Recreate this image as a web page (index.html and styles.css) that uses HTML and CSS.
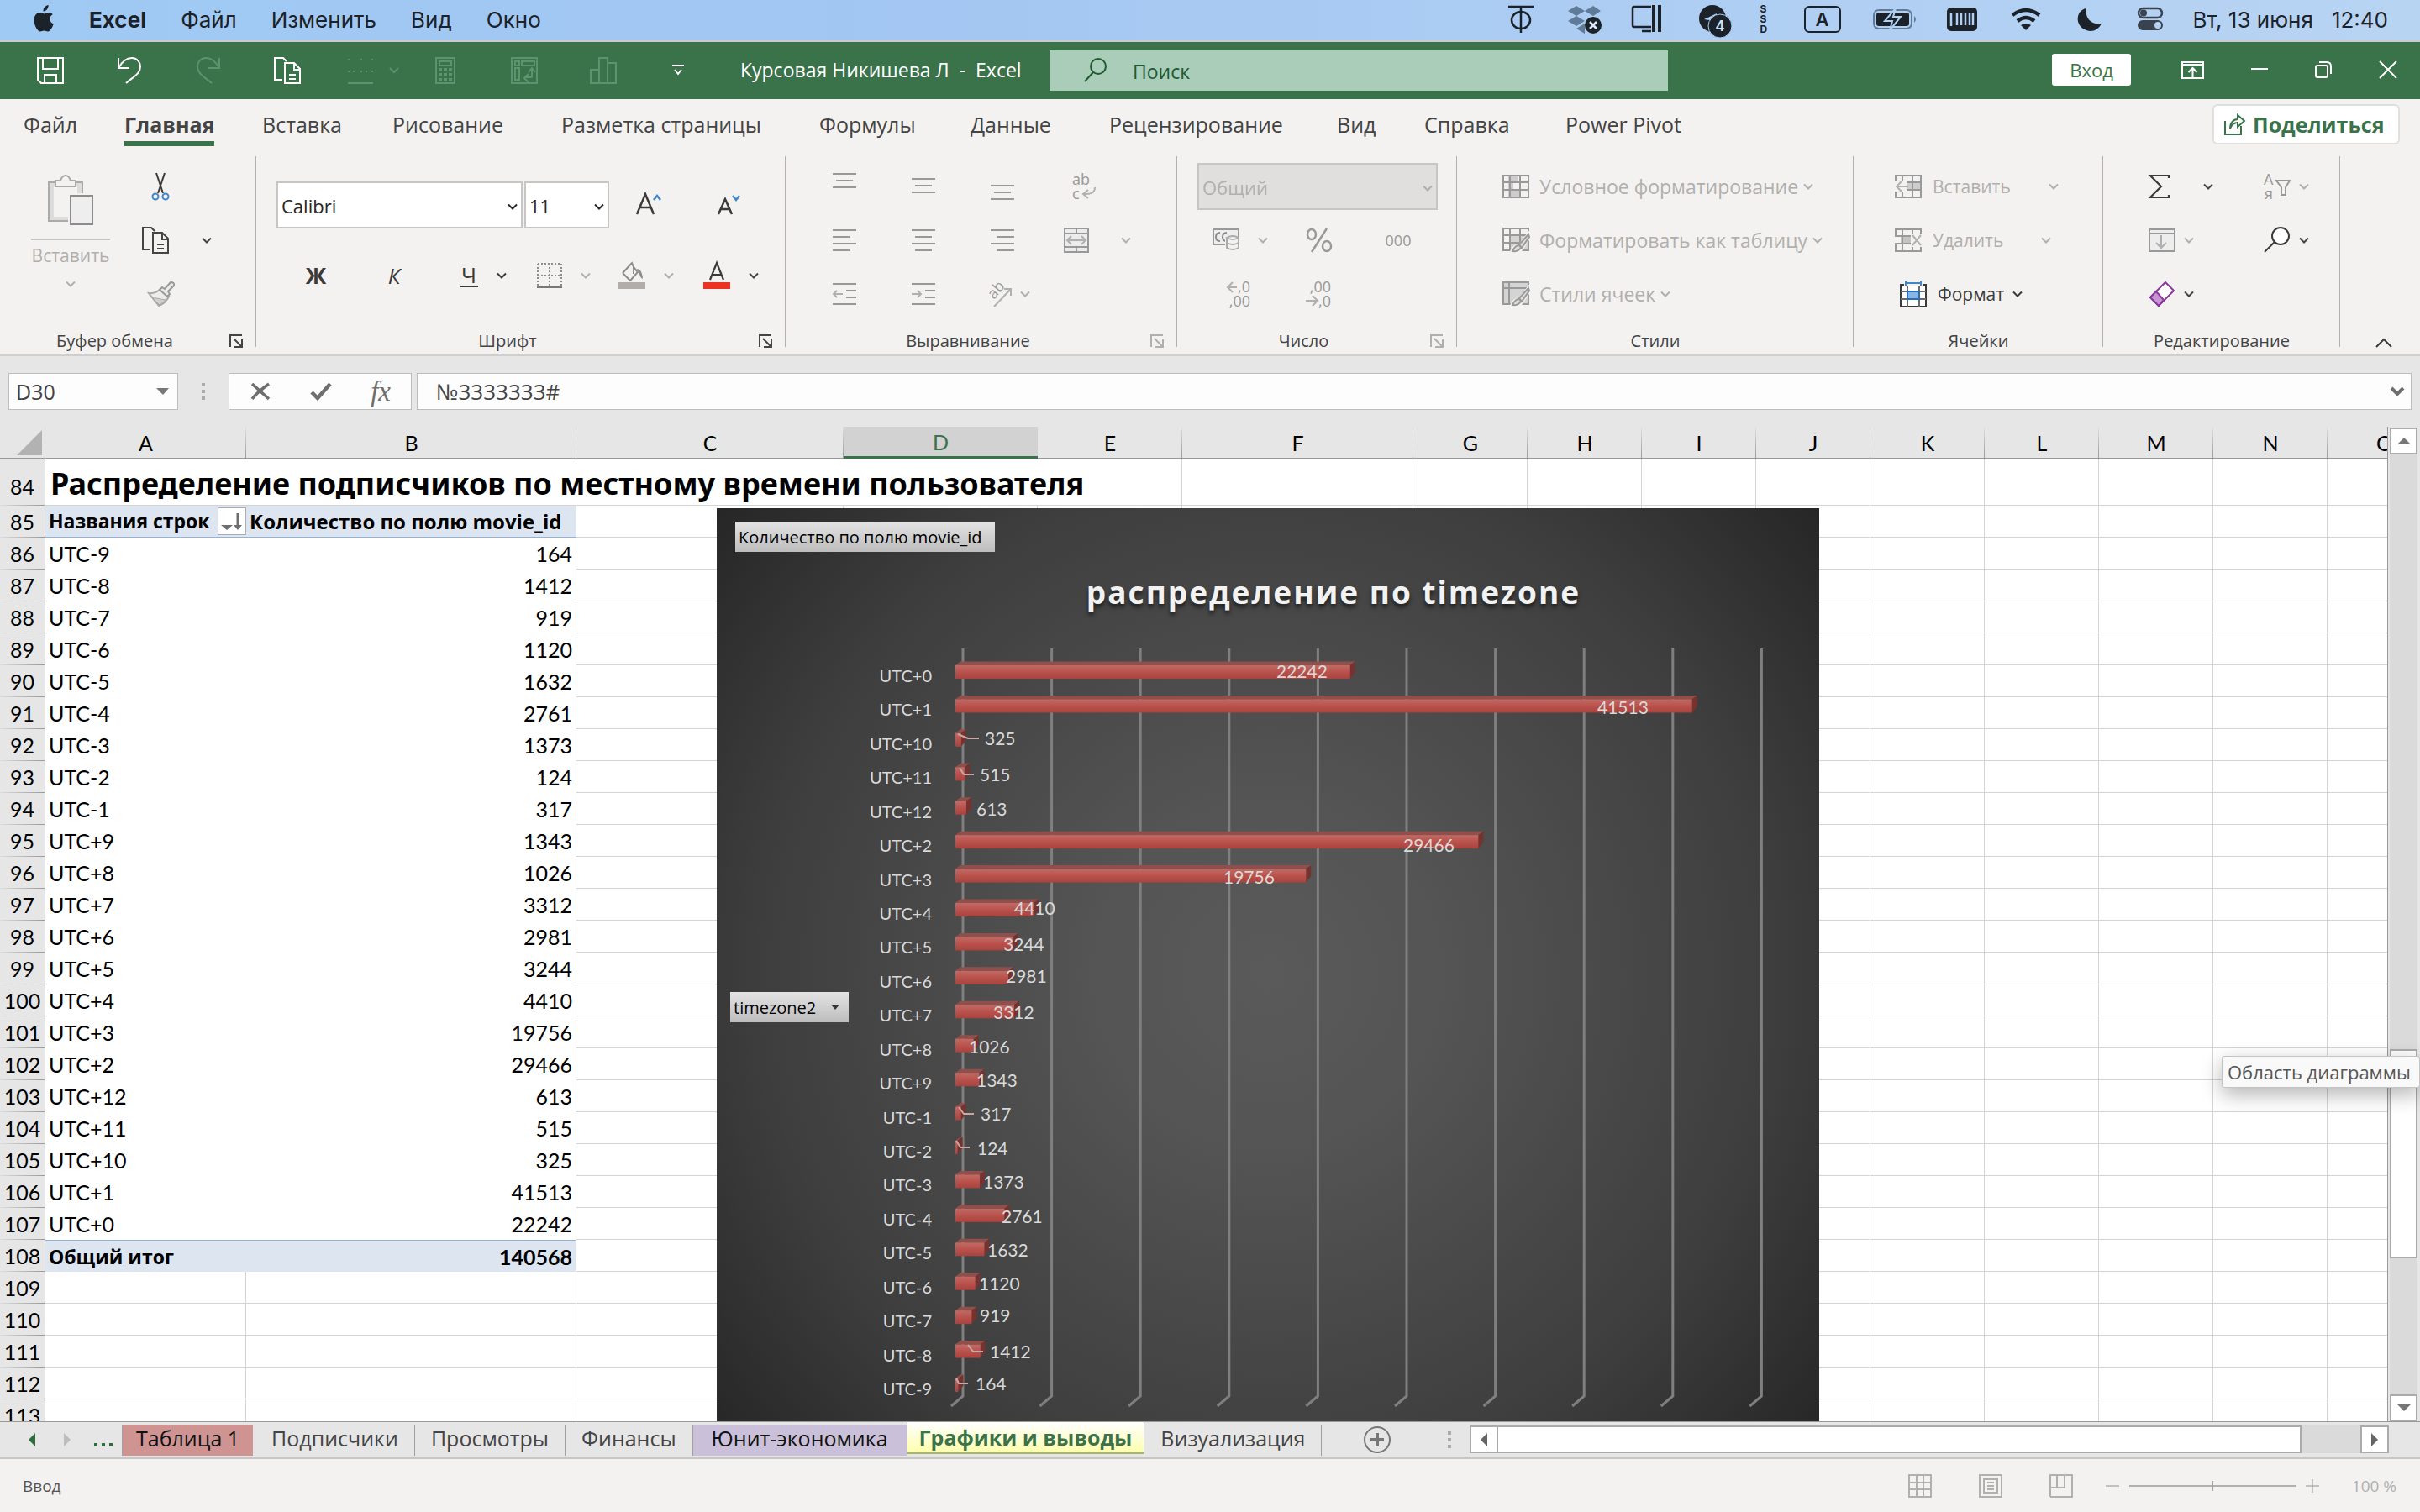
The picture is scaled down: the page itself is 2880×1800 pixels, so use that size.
FILE: index.html
```html
<!DOCTYPE html>
<html lang="ru">
<head>
<meta charset="utf-8">
<meta name="viewport" content="width=device-width, initial-scale=1">
<title>Курсовая Никишева Л - Excel</title>
<link rel="stylesheet" href="styles.css">
</head>
<body>
<svg class="defs" aria-hidden="true">
  <symbol id="chev" viewBox="0 0 12 8"><path d="M1 1.5 6 6.5 11 1.5" fill="none" stroke="currentColor" stroke-width="2"/></symbol>
  <symbol id="launch" viewBox="0 0 16 16"><path d="M1 15V1h14M5 5l9 9M15 6v9H6" fill="none" stroke="currentColor" stroke-width="2"/></symbol>
  <symbol id="copy" viewBox="0 0 32 32"><path d="M10 27H1V1h10l4 4" fill="none" stroke="currentColor" stroke-width="2"/><path d="M13 7h11l7 7v17H13zM24 7v8h7M18 21h8M18 26h8" fill="none" stroke="currentColor" stroke-width="2"/></symbol>
  <symbol id="table" viewBox="0 0 32 28"><path d="M1 1h30v26H1zM1 9h30M1 18h30M9 1v26M21 1v26" fill="none" stroke="currentColor" stroke-width="2"/></symbol>
</svg>

<nav class="menubar" aria-label="Строка меню">
  <svg class="apple" viewBox="0 0 25 32" width="25" height="32"><path d="M17.6 0c.2 2-.6 3.900-1.700 5.200-1.200 1.400-2.900 2.300-4.400 2.200-.2-1.900.7-3.900 1.700-5.100C14.400 1 16.200.1 17.600 0zM22.800 11c-2.300 1.400-3.500 3.200-3.400 5.500 0 2.900 1.700 5 4.300 6-.8 2.500-3.700 9-6.700 9-1.700 0-2.400-1-4.500-1s-2.900 1-4.500 1C4.500 31.500.6 24 .6 18c0-5.800 3.500-8.900 6.800-8.900 2.200 0 3.700 1.300 5.100 1.300 1.300 0 3.200-1.500 5.700-1.500 1.500 0 3.400.7 4.600 2.100z" fill="#1c2229"/></svg>
  <a class="app" href="#">Excel</a><a href="#">Файл</a><a href="#">Изменить</a><a href="#">Вид</a><a href="#">Окно</a>
  <div class="extras">
    <svg viewBox="0 0 64 48" width="64" height="48"><path d="M14 9h30M29 9v31" stroke="#1c2229" stroke-width="2.500"/><ellipse cx="29" cy="25" rx="11" ry="10" fill="none" stroke="#1c2229" stroke-width="2.500"/></svg>
    <svg viewBox="0 0 80 48" width="80" height="48"><path d="M21 14l10-6 10 6-10 6zM41 14l10-6 9 6-9 6zM21 26l10-6 10 6-10 6zM31 35l10-6v12z" fill="#5f7b98"/><circle cx="51" cy="31" r="10" fill="#1c2229"/><path d="M47 27l8 8m0-8l-8 8" stroke="#dceafa" stroke-width="2.500"/></svg>
    <svg viewBox="0 0 72 48" width="72" height="48"><path d="M40 9H20q-2 0-2 2v20q0 2 2 2h20M29 38h11" fill="none" stroke="#1c2229" stroke-width="2.500"/><path d="M43 7v32M50 7v32" stroke="#1c2229" stroke-width="4"/></svg>
    <svg viewBox="0 0 82 48" width="82" height="48"><circle cx="41" cy="23" r="16" fill="#1c2229"/><path d="M31 24l15-7-2 9z" fill="#b0cff2"/><circle cx="50" cy="32" r="14" fill="#1c2229" stroke="#aed0f3" stroke-width="1"/><text class="badge" x="50" y="38" text-anchor="middle">4</text></svg>
    <span class="ssd">S<br>S<br>D</span>
    <span class="lang"><b>A</b></span>
    <svg viewBox="0 0 88 48" width="88" height="48"><rect x="19" y="13" width="45" height="22" rx="6" fill="none" stroke="#5f7b98" stroke-width="2"/><path d="M67 20q4 4 0 8z" fill="#5f7b98"/><rect x="22" y="16" width="39" height="16" rx="3" fill="#1c2229"/><path d="M45 11L32 26h9l-3 11 13-16h-9z" fill="#1c2229" stroke="#add0f3" stroke-width="2"/></svg>
    <svg viewBox="0 0 76 48" width="76" height="48"><rect x="18" y="10" width="36" height="28" rx="5" fill="#1c2229"/><path d="M23 16v16M30 17v14M35 17v14M40 17v14M45 17v14M49 17v14" stroke="#b0d0f2" stroke-width="2.500"/></svg>
    <svg viewBox="0 0 74 48" width="74" height="48"><path d="M20 19q16-12 32 0M26 26q10-8 20 0" fill="none" stroke="#1c2229" stroke-width="4.500"/><path d="M30 31q6-4 12 0l-6 6z" fill="#1c2229"/></svg>
    <svg viewBox="0 0 74 48" width="74" height="48"><path d="M34 11c-2 12 6 20 18 18-3 6-8 9-13 9-20-2-19-25-5-27z" fill="#1c2229"/></svg>
    <svg viewBox="0 0 70 48" width="70" height="48"><rect x="22" y="11" width="28" height="11" rx="5.500" fill="none" stroke="#39434f" stroke-width="2.500"/><circle cx="28" cy="16.500" r="4" fill="#39434f"/><rect x="21" y="25" width="30" height="12" rx="6" fill="#39434f"/><circle cx="45" cy="31" r="4" fill="#b5d2f2"/></svg>
  </div>
  <time class="clock"><span>Вт, 13 июня</span><span>12:40</span></time>
</nav>

<header class="titlebar">
  <div class="quick">
    <button aria-label="Сохранить"><svg viewBox="0 0 32 32" width="32" height="32"><path d="M1 1h30v30H5l-4-4zM7 1v13h18V1M9 31V21h14v10" fill="none" stroke="currentColor" stroke-width="2"/></svg></button>
    <button aria-label="Отменить"><svg viewBox="0 0 32 32" width="32" height="32"><path d="M3 1v12h13M3 13C8 4 14 1 19 1c6 0 10 5 10 10 0 9-8 12-17 20" fill="none" stroke="currentColor" stroke-width="2"/></svg></button>
    <button class="dim" aria-label="Вернуть"><svg viewBox="0 0 32 32" width="32" height="32"><path d="M29 1v12H16M29 13C24 4 18 1 13 1 7 1 3 6 3 11c0 9 8 12 17 20" fill="none" stroke="currentColor" stroke-width="2"/></svg></button>
    <button aria-label="Копировать"><svg width="32" height="32"><use href="#copy"/></svg></button>
    <button class="dim" aria-label="Границы"><svg viewBox="0 0 76 32" width="76" height="32"><path d="M16 3h2m13 0h2m11 0h2M16 17h2m4 0h2m7 0h2m4 0h2m5 0h2M16 31h30M66 13l5 5 5-5" fill="none" stroke="currentColor" stroke-width="2"/></svg></button>
    <button class="dim" aria-label="Вычислить"><svg viewBox="0 0 32 32" width="32" height="32"><path d="M5 1h22v30H5zM9 5h14v5H9z" fill="none" stroke="currentColor" stroke-width="2"/><path d="M8 15h4m2 0h4m2 0h4M8 21h4m2 0h4m2 0h4M8 27h4m2 0h4m2 0h4" stroke="currentColor" stroke-width="4"/></svg></button>
    <button class="dim" aria-label="Сводная таблица"><svg viewBox="0 0 32 32" width="32" height="32"><path d="M1 1h30v30H1zM5 5h5v5H5zM13 5h15v5H13zM5 13h5v14H5zM25 24V14m-4 4 4-5 4 5M25 24h-8m4-4-5 5 5 5" fill="none" stroke="currentColor" stroke-width="2"/></svg></button>
    <button class="dim" aria-label="Диаграмма"><svg viewBox="0 0 32 32" width="32" height="32"><path d="M1 15h10v16H1zM11 1h10v30H11zM21 7h10v24H21z" fill="none" stroke="currentColor" stroke-width="2"/></svg></button>
    <button aria-label="Настройка панели"><svg viewBox="0 0 24 14" width="24" height="14"><path d="M0 1h14M3 6l4 5 4-5" fill="none" stroke="currentColor" stroke-width="2"/></svg></button>
  </div>
  <h1>Курсовая Никишева Л&nbsp; -&nbsp; Excel</h1>
  <label class="search">
    <svg viewBox="0 0 27 30" width="27" height="30"><circle cx="17" cy="10" r="9" fill="none" stroke="#1f5a33" stroke-width="2"/><path d="M11 17L1 28" stroke="#1f5a33" stroke-width="2"/></svg>
    <input type="text" placeholder="Поиск" aria-label="Поиск">
  </label>
  <div class="window">
    <button class="login">Вход</button>
    <button aria-label="Показ ленты"><svg viewBox="0 0 27 21" width="27" height="21"><path d="M1 1h25v19H1zM1 4h25M13.500 19V8m-5 5 5-5 5 5" fill="none" stroke="#fff" stroke-width="2"/></svg></button>
    <button aria-label="Свернуть"><svg viewBox="0 0 20 20" width="20" height="20"><path d="M0 9h20" stroke="#fff" stroke-width="2"/></svg></button>
    <button aria-label="Восстановить"><svg viewBox="0 0 20 20" width="20" height="20"><rect x="1" y="5" width="14" height="14" rx="2" fill="none" stroke="#fff" stroke-width="2"/><path d="M5 1h9q5 0 5 5v9" fill="none" stroke="#fff" stroke-width="2"/></svg></button>
    <button aria-label="Закрыть"><svg viewBox="0 0 22 20" width="22" height="20"><path d="M1 0l20 20M21 0L1 20" stroke="#fff" stroke-width="2"/></svg></button>
  </div>
</header>

<nav class="tabs" aria-label="Лента">
  <div class="tablist">
    <a href="#">Файл</a><a href="#" class="active">Главная</a><a href="#">Вставка</a><a href="#">Рисование</a><a href="#">Разметка страницы</a><a href="#">Формулы</a><a href="#">Данные</a><a href="#">Рецензирование</a><a href="#">Вид</a><a href="#">Справка</a><a href="#">Power Pivot</a>
  </div>
  <button class="share"><svg viewBox="0 0 26 26" width="26" height="26"><path d="M1 9v16h19V15M7 18c0-7 4-11 9-11V2l8 7-8 7v-5c-4 0-7 2-9 7z" fill="none" stroke="currentColor" stroke-width="2"/></svg>Поделиться</button>
</nav>

<section class="ribbon">
  <div class="group g-clip">
    <div class="body">
      <button class="paste off">
        <svg viewBox="0 0 54 60" width="54" height="60"><path d="M1 9h40v46H1z" fill="#dcdcdc" stroke="#aaa" stroke-width="2"/><path d="M7 14h28v36H7z" fill="#f3f2f0"/><path d="M9 14V7h6q2-6 6-6t6 6h6v7z" fill="#f3f2f0" stroke="#aaa" stroke-width="2"/><path d="M24 22h30v38H24z" fill="#f3f2f0"/><path d="M27 25h26v34H27z" fill="#eee" stroke="#8c8c8c" stroke-width="2"/></svg>
        <span>Вставить</span>
        <svg class="chev"><use href="#chev"/></svg>
      </button>
      <div class="rows">
        <button aria-label="Вырезать"><svg viewBox="0 0 34 32" width="34" height="32"><path d="M18 0l8 24M28 0l-8 24" fill="none" stroke="#3b3a39" stroke-width="2"/><circle cx="17" cy="28" r="3.500" fill="none" stroke="#3f87c9" stroke-width="2"/><circle cx="29" cy="28" r="3.500" fill="none" stroke="#3f87c9" stroke-width="2"/></svg></button>
        <button aria-label="Копировать"><svg width="34" height="32"><use href="#copy"/></svg><svg class="chev far"><use href="#chev"/></svg></button>
        <button class="off brush" aria-label="Формат по образцу"><svg viewBox="0 0 32 30" width="32" height="30"><path d="M1 14q8 1 14-5l10 9q-4 8-12 11z" fill="#ececec" stroke="#aaa" stroke-width="2"/><path d="M5 19l9 9 7-6z" fill="#d0d0d0" stroke="#aaa" stroke-width="1"/><path d="M14 10l3-3 3 2 7-8q5 0 4 4l-7 7 2 3-3 3z" fill="#ececec" stroke="#999" stroke-width="2"/></svg></button>
      </div>
    </div>
    <footer><span>Буфер обмена</span><button aria-label="Параметры буфера"><svg><use href="#launch"/></svg></button></footer>
  </div>

  <div class="group g-font">
    <div class="body">
      <div class="line">
        <span class="combo font-name"><select aria-label="Шрифт"><option>Calibri</option></select><svg class="chev"><use href="#chev"/></svg></span>
        <span class="combo font-size"><select aria-label="Размер"><option>11</option></select><svg class="chev"><use href="#chev"/></svg></span>
        <button class="grow" aria-label="Увеличить шрифт"><svg viewBox="0 0 30 28" width="30" height="28"><path d="M1 25L11 1l10 24M4 17h14" fill="none" stroke="#3b3a39" stroke-width="2.500"/><path d="M21 8l4-5 4 5" fill="none" stroke="#3f87c9" stroke-width="2.500"/></svg></button>
        <button class="shrink" aria-label="Уменьшить шрифт"><svg viewBox="0 0 28 28" width="28" height="28"><path d="M1 25L9 7l8 18M3 19h12" fill="none" stroke="#3b3a39" stroke-width="2.500"/><path d="M18 3l4 5 4-5" fill="none" stroke="#3f87c9" stroke-width="2.500"/></svg></button>
      </div>
      <div class="faces">
        <button class="face"><b>Ж</b></button>
        <button class="face"><i>К</i></button>
        <button class="face"><span class="under">Ч</span><svg class="chev wide"><use href="#chev"/></svg></button>
        <button class="off" aria-label="Границы"><svg viewBox="0 0 30 30" width="30" height="30"><path d="M1 1v27M29 1v27M15 1v27M1 1h28M1 15h28" fill="none" stroke="#8c8c8c" stroke-width="2" stroke-dasharray="2 2"/><path d="M0 29h30" stroke="#777" stroke-width="2"/></svg><svg class="chev wide"><use href="#chev"/></svg></button>
        <button class="off" aria-label="Цвет заливки"><svg viewBox="0 0 32 32" width="32" height="32"><path d="M5 13L16 1l2 5v8M18 6l5 6-9 10-9-9" fill="none" stroke="#8c8c8c" stroke-width="2"/><path d="M22 8q6 0 7 12-4-2-4-6z" fill="#8c8c8c"/><path d="M0 24h32v8H0z" fill="#b1adab"/></svg><svg class="chev wide"><use href="#chev"/></svg></button>
        <button aria-label="Цвет текста"><svg viewBox="0 0 32 32" width="32" height="32"><path d="M8 21l8-20 8 20M10.500 15h11" fill="none" stroke="#3b3a39" stroke-width="2.200"/><path d="M0 24h32v8H0z" fill="#ea3323"/></svg><svg class="chev wide"><use href="#chev"/></svg></button>
      </div>
    </div>
    <footer><span>Шрифт</span><button aria-label="Параметры шрифта"><svg><use href="#launch"/></svg></button></footer>
  </div>

  <div class="group g-align off">
    <div class="body">
      <button aria-label="По верхнему краю"><svg viewBox="0 0 28 32" width="28" height="32"><path d="M0 1h28M4 9h20M0 17h28" stroke="#999" stroke-width="2"/></svg></button>
      <button aria-label="По середине"><svg viewBox="0 0 28 32" width="28" height="32"><path d="M0 7h28M4 15h20M0 23h28" stroke="#999" stroke-width="2"/></svg></button>
      <button aria-label="По нижнему краю"><svg viewBox="0 0 28 32" width="28" height="32"><path d="M0 15h28M4 23h20M0 31h28" stroke="#999" stroke-width="2"/></svg></button>
      <button class="lead" aria-label="Перенести текст"><svg viewBox="0 0 44 32" width="44" height="32"><text class="glyph" x="10" y="14">ab</text><text class="glyph" x="10" y="31">c</text><path d="M37 17q0 9-13 8m5-5-6 5 6 5" fill="none" stroke="#b0b0b0" stroke-width="2"/></svg></button>
      <button aria-label="По левому краю"><svg viewBox="0 0 28 28" width="28" height="28"><path d="M0 2h28M0 10h20M0 18h28M0 26h20" stroke="#999" stroke-width="2"/></svg></button>
      <button aria-label="По центру"><svg viewBox="0 0 28 28" width="28" height="28"><path d="M0 2h28M4 10h20M0 18h28M4 26h20" stroke="#999" stroke-width="2"/></svg></button>
      <button aria-label="По правому краю"><svg viewBox="0 0 28 28" width="28" height="28"><path d="M0 2h28M8 10h20M0 18h28M8 26h20" stroke="#999" stroke-width="2"/></svg></button>
      <button class="lead" aria-label="Объединить"><svg viewBox="0 0 30 30" width="30" height="30"><path d="M1 1h28v28H1zM1 7h28M1 23h28M15 1v6M15 23v6" fill="#ececec" stroke="#999" stroke-width="2"/><path d="M5 15h20m-16-5-5 5 5 5m12-10 5 5-5 5" fill="none" stroke="#b0b0b0" stroke-width="2"/></svg><svg class="chev far"><use href="#chev"/></svg></button>
      <button aria-label="Уменьшить отступ"><svg viewBox="0 0 28 28" width="28" height="28"><path d="M0 2h28M16 10h12M16 18h12M0 26h28" stroke="#999" stroke-width="2"/><path d="M12 14H1m4-4-4 4 4 4" fill="none" stroke="#b0b0b0" stroke-width="2"/></svg></button>
      <button aria-label="Увеличить отступ"><svg viewBox="0 0 28 28" width="28" height="28"><path d="M0 2h28M16 10h12M16 18h12M0 26h28" stroke="#999" stroke-width="2"/><path d="M0 14h11m-4-4 4 4-4 4" fill="none" stroke="#b0b0b0" stroke-width="2"/></svg></button>
      <button class="lead" aria-label="Ориентация"><svg viewBox="0 0 32 32" width="32" height="32"><text class="glyph" x="0" y="0" transform="translate(11 23) rotate(-50)">ab</text><path d="M11 31L31 10m-8 0h8v8" fill="none" stroke="#b0b0b0" stroke-width="2"/></svg><svg class="chev near"><use href="#chev"/></svg></button>
    </div>
    <footer><span>Выравнивание</span><button aria-label="Параметры выравнивания"><svg><use href="#launch"/></svg></button></footer>
  </div>

  <div class="group g-num off">
    <div class="body">
      <span class="combo number"><select aria-label="Числовой формат" disabled><option>Общий</option></select><svg class="chev"><use href="#chev"/></svg></span>
      <button aria-label="Финансовый формат"><svg viewBox="0 0 32 28" width="32" height="28"><path d="M1 1h30v18H1z" fill="#eee" stroke="#999" stroke-width="2"/><path d="M9 5q-5 0-5 5t5 5M17 5q-5 0-5 5t5 5" fill="none" stroke="#8c8c8c" stroke-width="2"/><path d="M15 10h17v18H15z" fill="#f3f2f0"/><path d="M17 11v12q7 4 14 0V11q-7-4-14 0q7 4 14 0M17 17q7 4 14 0" fill="none" stroke="#aaa" stroke-width="2"/></svg><svg class="chev wide"><use href="#chev"/></svg></button>
      <button aria-label="Процентный формат"><svg viewBox="0 0 32 28" width="32" height="28"><path d="M25 0L7 28" stroke="#999" stroke-width="2.500"/><ellipse cx="7" cy="7" rx="5" ry="6" fill="none" stroke="#999" stroke-width="2.500"/><ellipse cx="25" cy="21" rx="5" ry="6" fill="none" stroke="#999" stroke-width="2.500"/></svg></button>
      <button class="zeros">000</button>
      <button aria-label="Увеличить разрядность"><svg viewBox="0 0 32 32" width="32" height="32"><text class="glyph" x="28" y="14" text-anchor="end">,0</text><text class="glyph" x="28" y="31" text-anchor="end">,00</text><path d="M12 8H1m6-6-6 6 6 6" fill="none" stroke="#b0b0b0" stroke-width="2"/></svg></button>
      <button aria-label="Уменьшить разрядность"><svg viewBox="0 0 32 32" width="32" height="32"><text class="glyph" x="30" y="14" text-anchor="end">,00</text><text class="glyph" x="30" y="31" text-anchor="end">,0</text><path d="M0 24h14m-6-6 6 6-6 6" fill="none" stroke="#b0b0b0" stroke-width="2"/></svg></button>
    </div>
    <footer><span>Число</span><button aria-label="Параметры числа"><svg><use href="#launch"/></svg></button></footer>
  </div>

  <div class="group g-styles">
    <div class="body rows">
      <button class="off"><svg viewBox="0 0 32 28" width="32" height="28"><path d="M7 1h11v8H7zM7 9h6v9H7zM7 18h15v9H7z" fill="#cdcdcd"/><use href="#table" width="32" height="28" color="#999"/></svg><span>Условное форматирование</span><svg class="chev"><use href="#chev"/></svg></button>
      <button class="off"><svg viewBox="0 0 32 30" width="32" height="30"><path d="M10 9h20v18H10z" fill="#d4d4d4"/><use href="#table" width="32" height="28" color="#999"/><path d="M31 8L20 22q-6-1-9 7 8 2 12-4l9-14z" fill="#ddd" stroke="#f3f2f0" stroke-width="4"/><path d="M31 8L20 20l3 4 9-13zM20 21q-5 0-8 7 8 1 10-5z" fill="#ddd" stroke="#999" stroke-width="2"/></svg><span>Форматировать как таблицу</span><svg class="chev"><use href="#chev"/></svg></button>
      <button class="off"><svg viewBox="0 0 32 30" width="32" height="30"><path d="M1 1h30v26H1zM1 8h30M8 1v26" fill="#d4d4d4" stroke="#999" stroke-width="2"/><path d="M31 8L20 22q-6-1-9 7 8 2 12-4l9-14z" fill="#ddd" stroke="#f3f2f0" stroke-width="4"/><path d="M31 8L20 20l3 4 9-13zM20 21q-5 0-8 7 8 1 10-5z" fill="#ddd" stroke="#999" stroke-width="2"/></svg><span>Стили ячеек</span><svg class="chev"><use href="#chev"/></svg></button>
    </div>
    <footer><span>Стили</span></footer>
  </div>

  <div class="group g-cells">
    <div class="body rows">
      <button class="off split"><svg viewBox="0 0 32 28" width="32" height="28"><path d="M12 9h19v9H12z" fill="#cdcdcd"/><use href="#table" width="32" height="28" color="#999"/><path d="M0 8h14v12H0z" fill="#f3f2f0"/><path d="M16 14H2m6-6-6 6 6 6" fill="none" stroke="#b0b0b0" stroke-width="2"/></svg><span>Вставить</span><svg class="chev"><use href="#chev"/></svg></button>
      <button class="off split"><svg viewBox="0 0 32 28" width="32" height="28"><path d="M7 9h14v9H7z" fill="#c4c4c4"/><use href="#table" width="32" height="28" color="#999"/><path d="M19 6h13v16H19zM0 10h6v7H0z" fill="#f3f2f0"/><path d="M21 8l10 12m0-12L21 20" fill="none" stroke="#b0b0b0" stroke-width="2"/></svg><span>Удалить</span><svg class="chev"><use href="#chev"/></svg></button>
      <button class="format"><svg viewBox="0 0 32 32" width="32" height="32"><path d="M1 5h30v26H1z" fill="#fff" stroke="#3b3a39" stroke-width="2"/><path d="M1 13h30M1 22h30M9 5v26M23 5v26" stroke="#6b6b6b" stroke-width="2"/><path d="M9 13h14v9H9z" fill="#86b6e6" stroke="#2b6cb5" stroke-width="2"/><path d="M5 0h22v7H5z" fill="#f3f2f0"/><path d="M7 3h18M7 0v6M25 0v6" stroke="#3f87c9" stroke-width="2"/></svg><span>Формат</span><svg class="chev near"><use href="#chev"/></svg></button>
    </div>
    <footer><span>Ячейки</span></footer>
  </div>

  <div class="group g-edit">
    <div class="body">
      <button class="sum" aria-label="Автосумма"><svg viewBox="0 0 32 28" width="32" height="28"><path d="M24 4V1H2l13 13L2 27h22v-3" fill="none" stroke="#3b3a39" stroke-width="2.200"/></svg><svg class="chev"><use href="#chev"/></svg></button>
      <button class="off" aria-label="Сортировка"><svg viewBox="0 0 32 32" width="32" height="32"><text class="glyph" x="0" y="14">A</text><text class="glyph" x="1" y="31">я</text><path d="M15 9h16l-5 8v9h-5v-9z" fill="none" stroke="#999" stroke-width="2"/></svg><svg class="chev"><use href="#chev"/></svg></button>
      <button class="off" aria-label="Заполнить"><svg viewBox="0 0 32 28" width="32" height="28"><path d="M1 1h30v26H1zM1 6h30" fill="#ededed" stroke="#999" stroke-width="2"/><path d="M15 8v15m-6-6 6 6 6-6" fill="none" stroke="#b0b0b0" stroke-width="2"/></svg><svg class="chev"><use href="#chev"/></svg></button>
      <button aria-label="Найти"><svg viewBox="0 0 32 32" width="32" height="32"><circle cx="20" cy="11" r="10" fill="#fff" stroke="#3b3a39" stroke-width="2"/><path d="M13 18L1 30" stroke="#3b3a39" stroke-width="2"/></svg><svg class="chev"><use href="#chev"/></svg></button>
      <button aria-label="Очистить"><svg viewBox="0 0 32 30" width="32" height="30"><path d="M20 1l10 10-18 18L2 19z" fill="#fff" stroke="#8a3a9b" stroke-width="2"/><path d="M9 12l9 10-6 7L2 19z" fill="#c795d3" stroke="#8a3a9b" stroke-width="2"/></svg><svg class="chev"><use href="#chev"/></svg></button>
    </div>
    <footer><span>Редактирование</span></footer>
  </div>
  <button class="collapse" aria-label="Свернуть ленту"><svg viewBox="0 0 20 12" width="20" height="12"><path d="M1 11l9-9 9 9" fill="none" stroke="#3b3a39" stroke-width="2"/></svg></button>
</section>

<section class="formula">
  <div class="field namebox"><input type="text" value="D30" aria-label="Имя ячейки"><svg viewBox="0 0 15 8" width="15" height="8"><path d="M0 0h15l-7 8z" fill="#777"/></svg></div>
  <svg class="dots" viewBox="0 0 4 20" width="4" height="20"><path d="M2 0v4m0 4v4m0 4v4" stroke="#ababab" stroke-width="4"/></svg>
  <div class="field actions">
    <button aria-label="Отмена"><svg viewBox="0 0 24 22" width="24" height="22"><path d="M2 2l20 18M22 2Q8 12 2 20" fill="none" stroke="#6e6e6e" stroke-width="3.500"/></svg></button>
    <button aria-label="Ввод"><svg viewBox="0 0 26 22" width="26" height="22"><path d="M2 12l7 7L24 2" fill="none" stroke="#6e6e6e" stroke-width="4.500"/></svg></button>
    <button class="fx">fx</button>
  </div>
  <div class="field entry"><input type="text" value="№3333333#" aria-label="Строка формул"><svg viewBox="0 0 18 12" width="18" height="12"><path d="M2 2l7 7 7-7" fill="none" stroke="#6e6e6e" stroke-width="4"/></svg></div>
</section>

<main class="workspace">
  <div class="sheet">
    <table class="grid">
      <colgroup><col class="c-num"><col class="c-a"><col class="c-b"><col class="c-c"><col class="c-d"><col class="c-e"><col class="c-f"><col span="9" class="c-std"></colgroup>
      <thead><tr>
        <th class="corner"><svg viewBox="0 0 30 30" width="30" height="30"><path d="M30 0v30H0z" fill="#b2b2b2"/></svg></th>
        <th>A</th><th>B</th><th>C</th><th class="current">D</th><th>E</th><th>F</th><th>G</th><th>H</th><th>I</th><th>J</th><th>K</th><th>L</th><th>M</th><th>N</th><th>O</th>
      </tr></thead>
      <tbody id="rows"></tbody>
    </table>
    <figure class="chart">
      <svg id="plot" viewBox="0 0 1312 1087" role="img" aria-label="распределение по timezone"></svg>
      <button class="pivot value">Количество по полю movie_id</button>
      <button class="pivot axis">timezone2<svg viewBox="0 0 10 6" width="10" height="6"><path d="M0 0h10L5 6z" fill="#333"/></svg></button>
    </figure>
  </div>
  <div class="vscroll">
    <button aria-label="Вверх"><svg viewBox="0 0 16 8" width="16" height="8"><path d="M0 8h16L8 0z" fill="#777"/></svg></button>
    <div class="above"></div><div class="thumb"></div><div class="below"></div>
    <button aria-label="Вниз"><svg viewBox="0 0 16 8" width="16" height="8"><path d="M0 0h16L8 8z" fill="#777"/></svg></button>
  </div>
  <div class="tooltip" role="tooltip">Область диаграммы</div>
</main>

<nav class="sheets" aria-label="Листы">
  <div class="nav-arrows">
    <button aria-label="Предыдущий лист"><svg viewBox="0 0 8 16" width="8" height="16"><path d="M8 0v16L0 8z" fill="#2f6b3d"/></svg></button>
    <button aria-label="Следующий лист"><svg viewBox="0 0 8 16" width="8" height="16"><path d="M0 0v16l8-8z" fill="#bdbdbd"/></svg></button>
    <button aria-label="Все листы"><svg viewBox="0 0 22 16" width="22" height="16"><path d="M0 14h4m5 0h4m5 0h4" stroke="#2f6b3d" stroke-width="4"/></svg></button>
  </div>
  <a href="#" class="red">Таблица 1</a><a href="#">Подписчики</a><a href="#">Просмотры</a><a href="#">Финансы</a><a href="#" class="violet">Юнит-экономика</a><a href="#" class="selected">Графики и выводы</a><a href="#">Визуализация</a>
  <button class="add" aria-label="Новый лист"><svg viewBox="0 0 34 34" width="34" height="34"><circle cx="17" cy="17" r="15" fill="none" stroke="#777" stroke-width="2"/><path d="M9 17h16M17 9v16" stroke="#777" stroke-width="4"/></svg></button>
  <svg class="dots" viewBox="0 0 4 20" width="4" height="20"><path d="M2 0v4m0 4v4m0 4v4" stroke="#ababab" stroke-width="4"/></svg>
  <div class="hscroll">
    <button aria-label="Влево"><svg viewBox="0 0 8 16" width="8" height="16"><path d="M8 0v16L0 8z" fill="#666"/></svg></button>
    <div class="thumb"></div><div class="rest"></div>
    <button aria-label="Вправо"><svg viewBox="0 0 8 16" width="8" height="16"><path d="M0 0v16l8-8z" fill="#666"/></svg></button>
  </div>
</nav>

<footer class="status">
  <span class="mode">Ввод</span>
  <button aria-label="Обычный"><svg viewBox="0 0 28 28" width="28" height="28"><path d="M1 1h26v26H1zM1 10h26M1 18h26M10 1v26M18 1v26" fill="none" stroke="#b0b0b0" stroke-width="2"/></svg></button>
  <button aria-label="Разметка страницы"><svg viewBox="0 0 28 28" width="28" height="28"><path d="M1 1h26v26H1zM6 6h16v16H6zM10 10h8M10 14h8M10 18h8" fill="none" stroke="#b0b0b0" stroke-width="2"/></svg></button>
  <button aria-label="Страничный"><svg viewBox="0 0 28 28" width="28" height="28"><path d="M1 27V1h26v26H1M9 1v15M18 1v15H1" fill="none" stroke="#b0b0b0" stroke-width="2"/></svg></button>
  <div class="zoom">
    <button aria-label="Мельче"><svg viewBox="0 0 16 16" width="16" height="16"><path d="M0 8h16" stroke="#909090" stroke-width="1"/></svg></button>
    <input type="range" min="0" max="200" value="100" aria-label="Масштаб">
    <button aria-label="Крупнее"><svg viewBox="0 0 16 16" width="16" height="16"><path d="M0 8h16M8 0v16" stroke="#909090" stroke-width="1"/></svg></button>
  </div>
  <span class="percent">100 %</span>
</footer>
<script src="app.js"></script>
</body>
</html>
```
FILE: styles.css
```css
:root{
  --ui:"Open Sans","Noto Sans",sans-serif;
  --cell:Lato,"Open Sans",sans-serif;
  --green:#3a724a;
  --chrome:#e6e6e6;
  --ribbon:#f3f2f0;
  --line:#d4d4d4;
  --ink:#444;
}
*{box-sizing:border-box}
body{margin:0;height:100vh;display:flex;flex-direction:column;overflow:hidden;font-family:var(--ui);font-size:25px;color:var(--ink);background:var(--ribbon)}
button{font:inherit;color:inherit;background:none;border:0;padding:0;margin:0;display:inline-flex;align-items:center}
a{color:inherit;text-decoration:none;white-space:nowrap}
input,select{font:inherit;color:inherit}
svg{flex:none;display:block;overflow:visible}
.defs{display:none}
.off{color:#b1afad}
.chev{width:12px;height:8px}

/* system menu */
.menubar{height:50px;padding:0 38px 2px 40px;display:flex;align-items:center;gap:41px;border-bottom:2px solid #c9cbcd;background:linear-gradient(90deg,#9fcaf4,#a2c6f2 35%,#b8d4f3);font-family:Inter,sans-serif;font-size:26px;color:#1c2229}
.apple{margin-bottom:2px}
.app{font-weight:700}
.extras{margin-left:auto;display:flex;align-items:center}
.ssd{width:42px;padding-left:16px;font:700 12px/12px Inter,sans-serif}
.lang{width:90px;padding-left:26px}
.lang b{display:block;width:44px;height:32px;border:2px solid #1c2229;border-radius:6px;font-size:22px;font-weight:600;line-height:28px;text-align:center}
.badge{font:600 17px Inter,sans-serif;fill:#cfe2f7}
.clock{display:flex;gap:22px;margin-left:-24px;white-space:nowrap}

/* title bar */
.titlebar{height:68px;display:flex;align-items:center;background:var(--green);color:#fff}
.quick{display:flex;padding-left:13px}
.quick button{width:94px;height:68px;justify-content:center}
.quick .dim{color:#5d9470}
h1{width:390px;margin:0;padding:0 0 2px 22px;font-size:23px;font-weight:400;white-space:nowrap}
.search{flex:0 1 736px;height:48px;display:flex;align-items:center;gap:31px;padding-left:41px;background:#a9cdb8}
.search input{flex:1;min-width:0;border:0;background:none;outline:0;font-size:23px;color:#1f5a33;padding:2px 0 0}
.search input::placeholder{color:#1f5a33;opacity:1}
.window{margin-left:auto;display:flex;align-items:center;gap:56px;padding:0 27px 2px 0}
.login{height:38px;width:94px;margin-right:4px;justify-content:center;background:#fff;color:var(--green);border-radius:3px;font-size:22px}

/* ribbon tabs */
.tabs{height:62px;display:flex;justify-content:space-between;align-items:flex-start;padding:6px 24px 0 28px}
.tablist{display:grid;grid-template-columns:120px 164px 155px 201px 307px 180px 165px 271px 104px 168px auto;justify-items:start}
.tablist a{height:50px;padding-top:6px;line-height:36px}
.tablist .active{font-weight:700;border-bottom:6px solid var(--green)}
.share{height:48px;width:223px;gap:8px;padding-left:12px;background:#fff;border:2px solid #e1dfdd;border-radius:6px;color:var(--green);font-weight:700}

/* ribbon groups */
.ribbon{height:244px;display:flex;border-bottom:2px solid #d0cfcd}
.group{position:relative;display:flex;flex-direction:column;padding-bottom:2px}
.group::after{content:"";position:absolute;right:0;top:6px;bottom:9px;width:1px;background:#b3b0ad}
.group .body{flex:1;padding-top:10px}
.group footer{display:flex;align-items:center;justify-content:center;height:28px;font-size:20px;line-height:28px;color:var(--ink)}
.group footer span{flex:1;text-align:center}
.group footer button{width:16px;height:28px;margin:0 16px 0 0}
.group footer svg{width:16px;height:16px}
.off footer button{color:#b1afad}
.rows{display:grid;grid-template-rows:repeat(3,64px);align-content:start}
.far{margin-left:38px}
.wide{margin-left:22px}
.near{margin-left:10px}
.g-clip{width:305px}
.g-clip .body{display:grid;grid-template-columns:168px 1fr}
.paste{flex-direction:column;padding-top:18px;font-size:21px}
.paste span{width:94px;margin:16px 0 14px;padding-top:2px;border-top:2px solid #c8c6c4;line-height:32px}
.brush{padding-left:8px}
.g-font{width:630px}
.g-font .body{padding:36px 0 0 24px}
.line{display:flex;align-items:center}
.combo{position:relative;display:block;height:56px;color:#262626}
.combo select{width:100%;height:100%;appearance:none;border:2px solid #c8c6c4;border-radius:0;background:#fff;padding:2px 0 0 4px;font-size:22px;opacity:1}
.combo .chev{position:absolute;right:6px;top:26px}
.font-name{width:293px;margin-right:2px}
.font-size{width:101px}
.grow{margin-left:32px}
.shrink{margin-left:67px}
.faces{display:grid;grid-template-columns:94px 92px 120px 72px 124px 78px;height:62px;margin-top:25px}
.faces button{justify-content:center}
.face{font-size:26px;color:#3b3a39}
.under{border-bottom:2px solid #3b3a39;line-height:26px;padding:0 2px}
.g-align{width:466px}
.g-align .body{display:grid;grid-template-columns:repeat(3,94px) 150px;grid-template-rows:repeat(3,64px);padding-left:23px}
.g-align .body button{justify-content:center}
.g-align .body .lead{justify-content:flex-start;padding-left:26px}
.glyph{font:18px "Open Sans",sans-serif;fill:#999}
.g-num{width:333px}
.g-num .body{display:grid;grid-template-columns:repeat(3,94px);grid-template-rows:repeat(3,64px);padding-left:28px}
.g-num .body button{justify-content:center}
.number{grid-column:1/-1;align-self:center;width:286px;margin-left:-4px;color:#b1afad}
.combo select:disabled{background:#e0dfde;color:#b1afad}
.g-num .body .zeros{font-size:18px;color:#999}
.g-styles{width:472px}
.g-styles .body{padding-left:54px}
.g-styles .body button{gap:12px;font-size:23px}
.g-styles .chev{margin-left:-6px}
.g-cells{width:297px}
.g-cells .body{padding-left:49px}
.g-cells .body button{font-size:21px}
.g-cells .body span{margin-left:13px}
.split .chev{margin-left:45px}
.g-cells .format{padding-left:6px;color:#3b3a39}
.g-edit{width:282px}
.g-edit .body{display:grid;grid-template-columns:137px 1fr;grid-template-rows:repeat(3,64px);padding-left:54px}
.g-edit .chev{margin-left:10px}
.g-edit .sum .chev{margin-left:33px}
.collapse{align-self:flex-end;margin:0 0 8px 42px}

/* formula bar */
.formula{height:84px;display:flex;align-items:flex-start;padding:20px 10px 0;background:var(--chrome)}
.field{height:44px;display:flex;align-items:center;background:#fdfdfd;border:1px solid #bdbdbd}
.field input{flex:1;min-width:0;border:0;background:none;outline:0;padding:0}
.namebox{width:202px;padding:0 10px 0 8px}
.dots{align-self:center}
.formula .dots{align-self:flex-start;margin:12px 28px 0}
.actions{width:218px;padding:0 24px 0 25px;justify-content:space-between}
.fx{font:italic 33px "Liberation Serif",serif;color:#6e6e6e}
.entry{flex:1;margin-left:6px;padding:0 7px 0 22px;font-size:26px}

/* worksheet */
.workspace{position:relative;flex:1;min-height:0;display:flex;background:var(--chrome)}
.sheet{position:relative;flex:1;min-width:0;overflow:hidden;background:#fff;border-right:1px solid #999}
.grid{width:2906px;table-layout:fixed;border-collapse:separate;border-spacing:0;font-family:var(--cell);font-size:25px;line-height:37px;color:#000}
.c-num{width:54px}.c-a{width:239px}.c-b{width:393px}.c-c{width:318px}.c-d{width:231px}.c-e{width:172px}.c-f{width:275px}.c-std{width:136px}
.grid th,.grid td{height:38px;padding:0;font-weight:400;white-space:nowrap}
.grid thead th{padding-top:1px;border-bottom:1px solid #999;background:linear-gradient(#e0e0e0,#999) right/1px 100% no-repeat var(--chrome);line-height:36px}
.grid thead .current{background:#d2d2d2;color:var(--green);border-bottom:3px solid var(--green);line-height:34px}
.corner svg{margin-left:20px}
.grid tbody th{text-align:center;border-right:1px solid #999;background:linear-gradient(90deg,#dcdcdc,#999) bottom/100% 1px no-repeat var(--chrome)}
.grid td{border:solid var(--line);border-width:0 1px 1px 0}
.grid td.label{border-width:0;padding-left:4px}
.grid td.amount{border-bottom-width:0;padding-right:4px;text-align:right}
.grid .title th,.grid .title td{height:56px;vertical-align:bottom;line-height:32px}
.grid .title th{padding-bottom:7px}
.grid td.heading{padding-left:6px;font:700 36px/50px "Noto Sans","Open Sans",sans-serif}
.grid .pivot-head td.label,.grid .pivot-head td.amount{background:#dde6f0;border:solid #95b3d7;border-width:0 0 1px;text-align:left;font:700 24px/37px var(--ui)}
.grid .pivot-head td.label{font-size:23px}
.grid .pivot-head td.amount{padding-left:4px}
.grid .pivot-total td.label,.grid .pivot-total td.amount{background:#dde6f0;border-top:1px solid #95b3d7;font-weight:700;line-height:36px}
.grid .pivot-total td.label{font:700 23px/36px var(--ui)}
.head-inner{display:flex;justify-content:space-between;align-items:center}
.filter{width:34px;height:33px;justify-content:center;background:#fff;border:1px solid #ababab}

/* chart lies over the cells */
.chart{position:absolute;left:853px;top:97px;width:1312px;height:1110px;margin:0;background:radial-gradient(circle at 50% 50%,#5a5a5a,#545454 25%,#3e3e3e 70%,#262626)}
.chart>svg{width:1312px;height:1087px}
.chart-title{font:700 37px var(--ui);letter-spacing:2px;fill:#f2f2f2;text-shadow:0 4px 5px rgba(0,0,0,.6)}
.cat{font:20px var(--cell);fill:#d9d9d9;text-anchor:end}
.val{font:21px var(--cell);fill:#d9d9d9}
.wall{fill:none;stroke:#7f7f7f;stroke-width:3}
.leader{fill:none;stroke:#c9a9a6;stroke-width:2}
.pivot{position:absolute;height:36px;padding-left:4px;background:linear-gradient(#e3e3e3,#bdbdbd);color:#000;font-size:20px;white-space:nowrap}
.value{left:22px;top:16px;width:309px}
.axis{left:16px;top:576px;width:141px;justify-content:space-between;padding-right:11px}

.vscroll{width:38px;display:flex;flex-direction:column;padding:1px 3px 0 2px}
.vscroll button{height:32px;justify-content:center;background:#fff;border:2px solid #ababab}
.above{flex:711;background:#dadada}
.vscroll .thumb{flex:246;background:#fff;border:2px solid #ababab}
.below{flex:163;background:#dadada}
.tooltip{position:absolute;right:0;bottom:397px;height:38px;width:236px;padding-left:6px;line-height:36px;font-size:22px;white-space:nowrap;color:#575757;background:#f9f9f9;border:1px solid #c4c4c4;border-radius:3px;box-shadow:0 8px 24px rgba(0,0,0,.3)}

/* sheet tabs */
.sheets{height:45px;display:flex;background:var(--chrome);border-top:1px solid #999;border-bottom:2px solid #c8c6c4}
.nav-arrows{width:145px;display:flex;align-items:center;padding-left:34px;gap:34px}
.nav-arrows button:last-child{margin-left:-6px}
.sheets a{display:block;height:37px;margin-top:3px;padding:0 19px;line-height:33px;border-left:1px solid #a0a0a0}
.sheets .red{padding:0 16px;background:#cf9492;color:#111;border-right:2px solid var(--chrome)}
.sheets .violet{padding:0 22px;background:#cac0d9;color:#111}
.sheets .selected{height:38px;margin-top:0;padding:2px 14px 0;background:linear-gradient(#fff,#feffb0);color:var(--green);font-weight:700;border-right:1px solid #a0a0a0;border-bottom:3px solid #a9b56a}
.sheets .selected+a{border-left:0;border-right:1px solid #a0a0a0}
.add{margin:0 67px 0 49px}
.hscroll{flex:1;display:flex;height:33px;margin:4px 37px 0 22px}
.hscroll button{width:34px;justify-content:center;background:#fff;border:2px solid #ababab}
.hscroll .thumb{flex:958;background:#fff;border:solid #ababab;border-width:2px 2px 2px 0}
.rest{flex:70;background:#dadada}

/* status bar */
.status{height:63px;display:flex;align-items:center;padding:0 28px 0 27px;font-size:19px;color:#555}
.mode{flex:1}
.status>button{margin-right:56px}
.zoom{display:flex;align-items:center;gap:12px;margin:0 39px 0 -17px}
.zoom input{appearance:none;width:198px;height:16px;margin:0;background:linear-gradient(#b0b0b0,#b0b0b0) center/100% 2px no-repeat}
.zoom input::-webkit-slider-thumb{appearance:none;width:2px;height:12px;background:#a0a0a0}
.percent{color:#b0b0b0}
```
FILE: app.js
```js
const records = [
  ["UTC-9", 164], ["UTC-8", 1412], ["UTC-7", 919], ["UTC-6", 1120], ["UTC-5", 1632], ["UTC-4", 2761],
  ["UTC-3", 1373], ["UTC-2", 124], ["UTC-1", 317], ["UTC+9", 1343], ["UTC+8", 1026], ["UTC+7", 3312],
  ["UTC+6", 2981], ["UTC+5", 3244], ["UTC+4", 4410], ["UTC+3", 19756], ["UTC+2", 29466], ["UTC+12", 613],
  ["UTC+11", 515], ["UTC+10", 325], ["UTC+1", 41513], ["UTC+0", 22242]
];

/* worksheet rows */
const blank = n => "<td></td>".repeat(n);
const sortIcon = '<button class="filter" aria-label="Фильтр"><svg viewBox="0 0 26 20" width="26" height="20"><path d="M0 14h14l-7 6zM15 14h10l-5 6z" fill="#6e6e6e"/><path d="M20 0v16" stroke="#6e6e6e" stroke-width="3"/></svg></button>';
let rows = `<tr class="title"><th>84</th><td class="heading" colspan="5">Распределение подписчиков по местному времени пользователя</td>${blank(10)}</tr>`;
rows += `<tr class="pivot-head"><th>85</th><td class="label"><div class="head-inner">Названия строк${sortIcon}</div></td><td class="amount">Количество по полю movie_id</td>${blank(13)}</tr>`;
records.forEach(([zone, count], i) => {
  rows += `<tr><th>${86 + i}</th><td class="label">${zone}</td><td class="amount">${count}</td>${blank(13)}</tr>`;
});
rows += `<tr class="pivot-total"><th>108</th><td class="label">Общий итог</td><td class="amount">140568</td>${blank(13)}</tr>`;
for (let n = 109; n <= 113; n++) rows += `<tr><th>${n}</th>${blank(15)}</tr>`;
document.getElementById("rows").innerHTML = rows;

/* 3-D bar chart: zone, count, position of the value label, optional leader line */
const bars = [
  ["UTC+0", 22242, 666, 202], ["UTC+1", 41513, 1048, 245], ["UTC+10", 325, 319, 282, "M287 269l12 5h13"],
  ["UTC+11", 515, 313, 325, "M289 309l5 8h12"], ["UTC+12", 613, 309, 366], ["UTC+2", 29466, 817, 409],
  ["UTC+3", 19756, 603, 447], ["UTC+4", 4410, 354, 484], ["UTC+5", 3244, 341, 527], ["UTC+6", 2981, 344, 565],
  ["UTC+7", 3312, 329, 608], ["UTC+8", 1026, 300, 649], ["UTC+9", 1343, 309, 689],
  ["UTC-1", 317, 314, 729, "M288 713l6 8h12"], ["UTC-2", 124, 310, 770, "M285 753l5 8h11"], ["UTC-3", 1373, 317, 810],
  ["UTC-4", 2761, 339, 851], ["UTC-5", 1632, 322, 891], ["UTC-6", 1120, 312, 931], ["UTC-7", 919, 313, 969],
  ["UTC-8", 1412, 325, 1012, "M299 996l6 8h12"], ["UTC-9", 164, 308, 1050, "M285 1036l3 6h11"]
];
const pitch = 849 / 21, left = 284, scale = 0.02112;
let art = '<defs><linearGradient id="face" x2="0" y2="1"><stop offset="0" stop-color="#c16a65"/><stop offset=".5" stop-color="#ba524c"/><stop offset="1" stop-color="#a8433d"/></linearGradient></defs>';
art += '<text class="chart-title" x="734" y="114" text-anchor="middle">распределение по timezone</text>';
for (let i = 0; i < 10; i++) art += `<path class="wall" d="M${293 + i * 105.6} 167V1057l-14 12"/>`;
bars.forEach(([zone, count], i) => {
  const y = 187 + i * pitch, w = count * scale, r = left + w;
  art += `<path d="M${left} ${y}l6-4.500H${r + 6}l-6 4.500z" fill="#8f504c"/>`;
  art += `<path d="M${r} ${y}l6-4.500v13l-6 7.500z" fill="#75322e"/>`;
  art += `<rect x="${left}" y="${y}" width="${w}" height="16" fill="url(#face)"/>`;
  art += `<text class="cat" x="256" y="${Math.round(207 + i * pitch)}">${zone}</text>`;
});
bars.forEach(([, count, x, y, leader]) => {
  if (leader) art += `<path class="leader" d="${leader}"/>`;
  art += `<text class="val" x="${x}" y="${y}">${count}</text>`;
});
document.getElementById("plot").innerHTML = art;
```
